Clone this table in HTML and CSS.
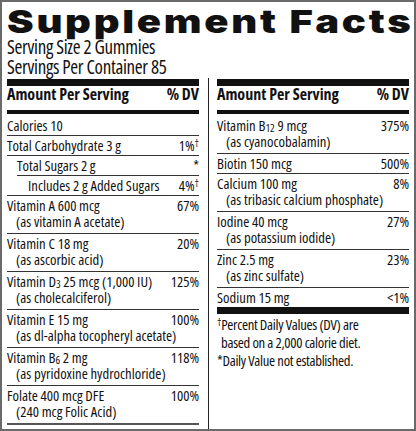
FILE: index.html
```
<!DOCTYPE html>
<html lang="en">
<head>
    <meta charset="UTF-8">
    <meta name="viewport" content="width=device-width, initial-scale=1.0">
    <title>Supplement Facts</title>
    <link rel="stylesheet" href="styles.css">
</head>
<body>
    <div class="label">
        <h1 class="title">Supplement Facts</h1>
        <p class="serving">Serving Size 2 Gummies</p>
        <p class="serving">Servings Per Container 85</p>

        <div class="panels">
            <section class="panel">
                <div class="head"><span>Amount Per Serving</span><span>% DV</span></div>

                <div class="row first"><span>Calories 10</span></div>
                <div class="row"><span>Total Carbohydrate 3 g</span><span class="dv">1%<sup>†</sup></span></div>
                <div class="row sugars"><span>Total Sugars 2 g</span><span class="dv">*</span></div>
                <div class="row added"><span>Includes 2 g Added Sugars</span><span class="dv">4%<sup>†</sup></span></div>

                <div class="row two">
                    <div><span class="name">Vitamin A 600 mcg</span><span class="note">(as vitamin A acetate)</span></div>
                    <span class="dv">67%</span>
                </div>
                <div class="row two">
                    <div><span class="name">Vitamin C 18 mg</span><span class="note">(as ascorbic acid)</span></div>
                    <span class="dv">20%</span>
                </div>
                <div class="row two">
                    <div><span class="name">Vitamin D<sub>3</sub> 25 mcg (1,000 IU)</span><span class="note">(as cholecalciferol)</span></div>
                    <span class="dv">125%</span>
                </div>
                <div class="row two">
                    <div><span class="name">Vitamin E 15 mg</span><span class="note">(as dl-alpha tocopheryl acetate)</span></div>
                    <span class="dv">100%</span>
                </div>
                <div class="row two">
                    <div><span class="name">Vitamin B<sub>6</sub> 2 mg</span><span class="note">(as pyridoxine hydrochloride)</span></div>
                    <span class="dv">118%</span>
                </div>
                <div class="row two last">
                    <div><span class="name">Folate 400 mcg DFE</span><span class="note">(240 mcg Folic Acid)</span></div>
                    <span class="dv">100%</span>
                </div>
            </section>

            <div class="divider"></div>

            <section class="panel">
                <div class="head"><span>Amount Per Serving</span><span>% DV</span></div>

                <div class="row two first">
                    <div><span class="name">Vitamin B<sub>12</sub> 9 mcg</span><span class="note">(as cyanocobalamin)</span></div>
                    <span class="dv">375%</span>
                </div>
                <div class="row"><span>Biotin 150 mcg</span><span class="dv">500%</span></div>
                <div class="row two">
                    <div><span class="name">Calcium 100 mg</span><span class="note">(as tribasic calcium phosphate)</span></div>
                    <span class="dv">8%</span>
                </div>
                <div class="row two">
                    <div><span class="name">Iodine 40 mcg</span><span class="note">(as potassium iodide)</span></div>
                    <span class="dv">27%</span>
                </div>
                <div class="row two">
                    <div><span class="name">Zinc 2.5 mg</span><span class="note">(as zinc sulfate)</span></div>
                    <span class="dv">23%</span>
                </div>
                <div class="row end"><span>Sodium 15 mg</span><span class="dv">&lt;1%</span></div>

                <div class="footnote">
                    <p><sup>†</sup>Percent Daily Values (DV) are</p>
                    <p class="indent">based on a 2,000 calorie diet.</p>
                    <p>*Daily Value not established.</p>
                </div>
            </section>
        </div>
    </div>
</body>
</html>
```

FILE: styles.css
```
* {
    box-sizing: border-box;
}
body {
    margin: 0;
    padding: 0;
    background-color: #fff;
    color: #111;
    font-family: "Open Sans", "Liberation Sans", sans-serif;
    font-stretch: 75%;
}
.label {
    width: 416px;
    height: 431px;
    border: 2px solid #6a6a6a;
    padding: 4px 5px 0;
    display: flex;
    flex-direction: column;
    overflow: hidden;
}
.title {
    margin: 0;
    height: 31px;
    font-family: "Inter", "DejaVu Sans", sans-serif;
    font-stretch: 100%;
    font-weight: 900;
    font-size: 32px;
    line-height: 31px;
    letter-spacing: 2.2px;
    color: #111;
    white-space: nowrap;
    transform: scaleX(1.25);
    transform-origin: left center;
}
.serving {
    margin: 0;
    font-size: 19px;
    line-height: 20px;
    letter-spacing: -0.3px;
}
.panels {
    flex: 1;
    display: flex;
    margin-top: 2px;
}
.panel {
    flex: 1 1 0;
    min-width: 0;
    border-top: 7px solid #111;
    font-size: 14.7px;
}
.divider {
    width: 1px;
    margin: -1px 8px 0 9px;
    background-color: #222;
}
.head {
    display: flex;
    justify-content: space-between;
    font-weight: 700;
    font-size: 16px;
    line-height: 17px;
    padding-bottom: 7px;
    border-bottom: 4px solid #111;
}
.row {
    display: flex;
    align-items: flex-start;
    line-height: 15px;
    padding: 2px 0 2px;
    border-bottom: 1px solid #333;
    white-space: nowrap;
}
.row > div {
    min-width: 0;
}
.dv {
    flex-shrink: 0;
    margin-left: auto;
}
.row.first {
    padding-top: 4px;
}
.row.two {
    padding-bottom: 4px;
}
.row.last {
    border-bottom-width: 2px;
    border-bottom-color: #555;
}
.row.end {
    border-bottom: none;
}
.row.sugars {
    margin-left: 10px;
}
.row.added {
    padding-left: 21px;
}
.name,
.note {
    display: block;
}
.note {
    line-height: 16px;
    padding-left: 9px;
}
sup {
    font-size: 10px;
    line-height: 0;
    vertical-align: 4px;
}
sub {
    font-size: 11px;
    line-height: 0;
    vertical-align: -1px;
}
.footnote {
    border-top: 7px solid #111;
    padding-top: 1px;
    letter-spacing: -0.3px;
}
.footnote p {
    margin: 0;
    line-height: 18px;
}
.footnote .indent {
    padding-left: 4px;
}
```
